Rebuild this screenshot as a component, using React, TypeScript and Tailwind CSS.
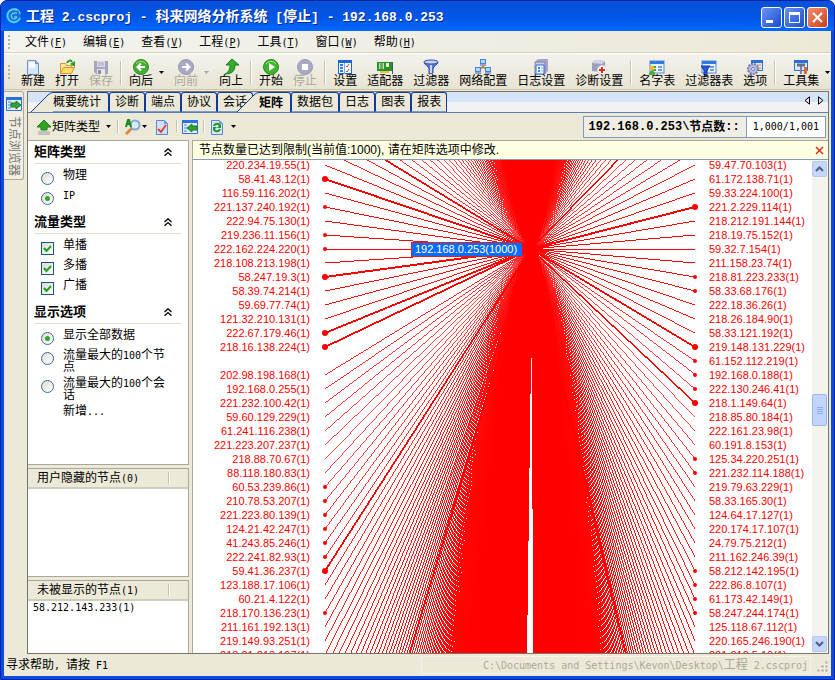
import type { ReactNode } from "react";

const LEFT_NODES = [
  "220.234.19.55", "58.41.43.12", "116.59.116.202", "221.137.240.192", "222.94.75.130", "219.236.11.156",
  "222.162.224.220", "218.108.213.198", "58.247.19.3", "58.39.74.214", "59.69.77.74", "121.32.210.131",
  "222.67.179.46", "218.16.138.224", "", "202.98.198.168", "192.168.0.255", "221.232.100.42",
  "59.60.129.229", "61.241.116.238", "221.223.207.237", "218.88.70.67", "88.118.180.83", "60.53.239.86",
  "210.78.53.207", "221.223.80.139", "124.21.42.247", "41.243.85.246", "222.241.82.93", "59.41.36.237",
  "123.188.17.106", "60.21.4.122", "218.170.136.23", "211.161.192.13", "219.149.93.251", "218.21.213.197",
];

const RIGHT_NODES = [
  "59.47.70.103", "61.172.138.71", "59.33.224.100", "221.2.229.114", "218.212.191.144", "218.19.75.152",
  "59.32.7.154", "211.158.23.74", "218.81.223.233", "58.33.68.176", "222.18.36.26", "218.26.184.90",
  "58.33.121.192", "219.148.131.229", "61.152.112.219", "192.168.0.188", "222.130.246.41", "218.1.149.64",
  "218.85.80.184", "222.161.23.98", "60.191.8.153", "125.34.220.251", "221.232.114.188", "219.79.63.229",
  "58.33.165.30", "124.64.17.127", "220.174.17.107", "24.79.75.212", "211.162.246.39", "58.212.142.195",
  "222.86.8.107", "61.173.42.149", "58.247.244.174", "125.118.67.112", "220.165.246.190", "221.212.5.10",
];

// row indexes, row 0 is the first visible one
const LEFT_HEAVY = [-3, 1, 8, 12, 13, 29, 55];
const RIGHT_HEAVY = [-6, 3, 13, 17, 56];
const LEFT_DOTS = [3, 5, 6, 23, 24, 25, 26, 27, 28, 32];
const RIGHT_DOTS = [8, 9, 14, 15, 16, 21, 22, 29, 30, 31, 32];
const ROWS = Array.from({ length: 500 }, (_, i) => i - 244);

const HUB = { x: 338, y: 89 };
const LEFT_X = 132;
const RIGHT_X = 502;
const rowY = (row: number) => 5 + row * 14;

function Ray({ x, row, weight = 1 }: { x: number; row: number; weight?: number }) {
  const dx = Math.abs(x - HUB.x);
  const dy = Math.abs(rowY(row) - HUB.y);
  // one pixel per step along the longer axis, whatever the angle
  const width = (weight * Math.max(dx, dy)) / Math.hypot(dx, dy);
  return <line x1={HUB.x} y1={HUB.y} x2={x} y2={rowY(row)} strokeWidth={width} />;
}

/* SimSun-like text: full-width glyphs at 12px, latin at half that width */
function T({ children }: { children: string }) {
  return (
    <>
      {children.split(/([\x20-\x7e]+)/).map((part, i) =>
        i % 2 ? (
          <span key={i} className="whitespace-pre font-['DejaVu_Sans_Mono','Noto_Sans_CJK_SC',monospace] text-[10px] leading-[0px]">{part}</span>
        ) : (
          part
        )
      )}
    </>
  );
}

const table = (
  <>
    <rect x="1" y="2" width="14" height="12" fill="#e8f2ff" stroke="#5a8ad0" />
    <rect x="1" y="2" width="14" height="3" fill="#2f7be0" />
    <path d="M3 8h4M9 8h4M3 11h4M9 11h4" stroke="#3f9a4a" strokeWidth="2" />
    <path d="M9 8h4M9 11h4" stroke="#6f9fe0" strokeWidth="2" />
  </>
);

const icons: Record<string, ReactNode> = {
  new: (
    <>
      <path d="M2.5 1.5h8l3 3v11h-11z" fill="#d4e6ff" stroke="#7090d0" />
      <path d="M4 3h6v6H4z" fill="#f6faff" />
      <path d="M10.5 1.5v3h3z" fill="#9cc0f4" stroke="#7090d0" />
    </>
  ),
  open: (
    <>
      <path d="M1.5 14.5v-10h5l1 2h5v3" fill="#ffe8a0" stroke="#d8962a" />
      <path d="M1.5 14.5l3-6h11l-3 6z" fill="#ffd870" stroke="#d8962a" />
      <path d="M8 4c1-3 4-3 5-1" fill="none" stroke="#2c9a1c" strokeWidth="2" />
      <path d="M16 2v6l-5-3z" fill="#2c9a1c" />
    </>
  ),
  save: (
    <>
      <path d="M1 2h14v13H3l-2-2z" fill="#a5a5bd" />
      <path d="M4 2h8v6H4z" fill="#dcdce8" />
      <path d="M5 4h6M5 6h6" stroke="#a5a5bd" />
      <path d="M4 10h8v5H4z" fill="#e6e6ee" />
      <path d="M5 11h3v4H5z" fill="#8c8ca8" />
    </>
  ),
  back: (
    <>
      <circle cx="8" cy="8" r="7.5" fill="#48ad35" stroke="#2c8a20" />
      <path d="M3 5a6 6 0 0 1 10 0" stroke="#9ae07e" fill="none" />
      <path d="M12 8H5M8 4.500L4.500 8 8 11.500" stroke="#fff" strokeWidth="2" fill="none" />
    </>
  ),
  forward: (
    <>
      <circle cx="8" cy="8" r="7.5" fill="#a6a8c4" stroke="#9698b8" />
      <path d="M4 8h7M8 4.500L11.500 8 8 11.500" stroke="#fff" strokeWidth="2" fill="none" />
    </>
  ),
  up: <path d="M9 0l7 6h-4c0 5-2 9-10 9 4-2 5-5 5-9H3z" fill="#35aa2c" stroke="#16801a" />,
  play: (
    <>
      <circle cx="8" cy="8" r="7.5" fill="#3fb52e" stroke="#238a1c" />
      <path d="M3 5a6 6 0 0 1 10 0" stroke="#a4ea88" fill="none" />
      <path d="M6 4l6 4-6 4z" fill="#fff" />
    </>
  ),
  stop: (
    <>
      <circle cx="8" cy="8" r="7.5" fill="#a8aac4" stroke="#9698b8" />
      <rect x="5" y="5" width="6" height="6" fill="#fff" />
    </>
  ),
  settings: (
    <>
      <rect x="1.500" y="1.500" width="13" height="13" fill="#f4f9ff" stroke="#1b66d8" />
      <path d="M1 1h14v3H1z" fill="#1b66d8" />
      <path d="M3 6h3M3 9h3M3 12h3" stroke="#2f7be0" strokeWidth="2" />
      <path d="M7.500 4v11" stroke="#7aa8ec" />
      <path d="M9 7l1 1 2-3M9 12l1 1 2-3" stroke="#e04a2a" fill="none" />
    </>
  ),
  adapter: (
    <>
      <path d="M0 3h15v9H0z" fill="#2c8e2c" />
      <path d="M2 4h5v6H2z" fill="#b9e6a4" />
      <path d="M3 5h3M3 7h3M3 9h3" stroke="#20702a" />
      <path d="M9 4h3v4H9z" fill="#e8f0c0" />
      <path d="M3 12h9v2H3z" fill="#e8c234" />
      <path d="M14 3h2v12h-1V5z" fill="#305878" />
    </>
  ),
  filter: (
    <>
      <path d="M1 3c0 3 5 4 5 7v5l4-1v-4c0-3 5-4 5-7z" fill="#5878d8" stroke="#3c50a8" />
      <path d="M8 6v8" stroke="#c8d8ff" strokeWidth="2" />
      <ellipse cx="8" cy="3" rx="7" ry="2" fill="#c4d2fa" stroke="#3c50a8" />
    </>
  ),
  network: (
    <>
      <path d="M8 5v4M3 11l5-3 5 3" stroke="#c0862a" strokeWidth="2" fill="none" />
      <path d="M5 0h6v5H5zM0 8h6v5H0zM10 8h6v5h-6z" fill="#4d82d8" />
      <path d="M6 1h4v3H6zM1 9h4v3H1zM11 9h4v3h-4z" fill="#a4dcff" />
      <path d="M5 6h6M0 14h6M10 14h6" stroke="#96a4cc" strokeWidth="2" />
    </>
  ),
  log: (
    <>
      <path d="M2 3l3-3h10v12l-3 3H2z" fill="#a4a6cc" />
      <path d="M2 3h10v12H2z" fill="#c6c8e4" stroke="#8082ac" />
      <path d="M3 6h8v9H3z" fill="#f4f8ff" stroke="#2a70d8" />
      <path d="M5 9h2M5 12h2" stroke="#3c80e0" strokeWidth="2" />
      <path d="M8 9h2M8 12h2" stroke="#8cb4f0" />
    </>
  ),
  diagnose: (
    <>
      <path d="M1 4l3-3 10 1v8l-3 3-10-1z" fill="#9da0bc" />
      <path d="M1 4l10 1 3-3-10-1z" fill="#d2d4e6" />
      <circle cx="11" cy="11" r="4.500" fill="#fff" stroke="#d8d8e0" />
      <path d="M11 8v6M8 11h6" stroke="#e8281c" strokeWidth="2" />
    </>
  ),
  names: (
    <>
      {table}
      <circle cx="3" cy="9" r="2.500" fill="#e6c02c" />
      <path d="M0 16c0-6 6-6 6 0z" fill="#4ca838" />
    </>
  ),
  filterTable: (
    <>
      {table}
      <path d="M0 7h9l-3 4v5H3v-5z" fill="#2456e8" stroke="#1636a0" />
    </>
  ),
  options: (
    <>
      <path d="M4.500 1.500h11v10h-11z" fill="#dcecff" stroke="#2a70d8" />
      <path d="M4 1h12v3H4z" fill="#2a70d8" />
      <path d="M10 6h4M11 9h3" stroke="#e08030" />
      <circle cx="6" cy="10" r="5" fill="#b8bce0" stroke="#7478ac" strokeWidth="2" strokeDasharray="2 1" />
      <circle cx="6" cy="10" r="1.500" fill="#fff" stroke="#7478ac" />
    </>
  ),
  tools: (
    <>
      <path d="M1.500 1.500h13v10h-13z" fill="#d8eaff" stroke="#2a70d8" />
      <path d="M1 1h14v3H1z" fill="#2a70d8" />
      <path d="M8 6v9" stroke="#8084a0" strokeWidth="2" />
      <path d="M4 6h8" stroke="#686c80" strokeWidth="3" />
      <path d="M12.500 8v7" stroke="#e06a28" strokeWidth="3" />
    </>
  ),
  green: (
    <>
      <path d="M8 1l7 7h-4v3H5V8H1z" fill="#2fa41f" stroke="#17801a" />
      <path d="M2 13h12M2 15h12" stroke="#9c9c98" />
    </>
  ),
  find: (
    <>
      <path d="M7 9l-6 6" stroke="#e08a3a" strokeWidth="3" />
      <circle cx="10" cy="6" r="4.500" fill="#d4ecff" stroke="#8aa4d0" strokeWidth="2" />
      <path d="M1 8l2-7h1l2 7M2 5h4" stroke="#158a1c" strokeWidth="2" fill="none" />
    </>
  ),
  check: (
    <>
      <path d="M2.500 1.500h8l3 3v11h-11z" fill="#cfe2ff" stroke="#5c84d0" />
      <path d="M10 1l4 4h-4z" fill="#6c9cec" />
      <path d="M4 10l3 3 5-7" stroke="#e8402c" strokeWidth="2" fill="none" />
    </>
  ),
  dockLeft: (
    <>
      <path d="M.5 1.500h15v13H.5z" fill="#e4f0ff" stroke="#2a70d8" />
      <path d="M0 1h16v3H0z" fill="#2a70d8" />
      <path d="M2 6h3M2 9h3M2 12h3" stroke="#3c80e0" />
      <path d="M5 9l5-4v2h5v4h-5v2z" fill="#33a32b" stroke="#187a1c" />
    </>
  ),
  dockRight: (
    <>
      <path d="M.5 1.500h15v13H.5z" fill="#e4f0ff" stroke="#2a70d8" />
      <path d="M0 1h16v3H0z" fill="#2a70d8" />
      <path d="M2 6h3M2 9h3M2 12h3" stroke="#3c80e0" />
      <path d="M15 9l-5-4v2H5v4h5v2z" fill="#33a32b" stroke="#187a1c" />
    </>
  ),
  refresh: (
    <>
      <path d="M2.500 1.500h8l3 3v11h-11z" fill="#d6e6ff" stroke="#5c84d0" />
      <path d="M10 1l4 4h-4z" fill="#6c9cec" />
      <path d="M5 7c1-3 5-3 6 0M11 10c-1 3-5 3-6 0" stroke="#1f9a22" strokeWidth="2" fill="none" />
      <path d="M12 5v4H8zM4 12V8h4z" fill="#1f9a22" />
    </>
  ),
};

function Icon({ name, className = "" }: { name: string; className?: string }) {
  return (
    <svg viewBox="0 0 16 16" aria-hidden="true" className={`size-4 shrink-0 ${className}`}>
      {icons[name]}
    </svg>
  );
}

function Caret({ off = false }: { off?: boolean }) {
  return (
    <svg viewBox="0 0 5 3" aria-hidden="true" className={`h-[3px] w-[5px] shrink-0 ${off ? "text-[#aca899]" : "text-black"}`}>
      <path d="M0 0h5L2.500 3z" fill="currentColor" />
    </svg>
  );
}

function Grip() {
  return (
    <div className="flex flex-col justify-center gap-[2px] py-1">
      {[0, 1, 2, 3].map((i) => (
        <span key={i} className="size-[2px] bg-[#b4b19f]" />
      ))}
    </div>
  );
}

function Separator({ className = "h-6" }: { className?: string }) {
  return <div className={`mx-[2px] w-[2px] shrink-0 border-l border-r border-l-[#c5c2b2] border-r-white ${className}`} />;
}

function Tool({ icon, label, off = false, drop = false }: { icon: string; label: string; off?: boolean; drop?: boolean }) {
  return (
    <>
      <button type="button" disabled={off} className={`flex shrink-0 flex-col items-center px-[5px] ${off ? "text-[#aca899]" : ""}`}>
        <Icon name={icon} />
        <span className="leading-[12px]">{label}</span>
      </button>
      {drop && (
        <button type="button" disabled={off} aria-label={`${label}选项`} className="mr-1 flex w-[7px] shrink-0 items-center justify-center">
          <Caret off={off} />
        </button>
      )}
    </>
  );
}

function Tab({ label, active = false, slant = false }: { label: string; active?: boolean; slant?: boolean }) {
  return (
    <button
      type="button"
      role="tab"
      aria-selected={active}
      className={`relative flex h-5 shrink-0 ${active ? "z-10 -ml-[16px] font-bold" : ""}`}
    >
      {slant && (
        <svg viewBox="0 0 22 20" aria-hidden="true" className="h-5 w-[22px]">
          <path d="M0 20L17 3Q19.500 .5 22 .5V20z" fill="#ece9d8" />
          <path d="M0 20L17 3Q19.500 .5 22 .5" fill="none" stroke="#123c9c" />
        </svg>
      )}
      <span
        className={`flex h-full items-center border-r border-t border-[#123c9c] bg-[#ece9d8] ${slant ? "rounded-tr-[3px] pr-[7px]" : "rounded-t-[3px] border-l px-[5px]"} ${active ? "" : "border-b border-b-[#7d9cc8]"}`}
      >
        {label}
      </span>
    </button>
  );
}

function Section({ title, children }: { title: string; children: ReactNode }) {
  return (
    <section>
      <h2 className="ml-[6px] mr-[6px] flex h-[23px] items-center justify-between border-b border-[#e2dfd0] pr-[10px] text-[13px] font-bold">
        {title}
        <button type="button" aria-label={`折叠${title}`}>
          <svg viewBox="0 0 8 8" className="size-2">
            <path d="M.5 4L4 .8 7.500 4M.5 7.800L4 4.600l3.500 3.200" fill="none" stroke="#000" strokeWidth="1.300" />
          </svg>
        </button>
      </h2>
      <div className="pb-1 pl-[13px] pt-[3px]">{children}</div>
    </section>
  );
}

function Choice({ type, name, label, checked = false }: { type: "radio" | "checkbox"; name: string; label: string; checked?: boolean }) {
  return (
    <label className="flex min-h-5 items-start gap-[9px]">
      <span className="mt-[5px] grid size-[13px] shrink-0">
        <input
          type={type}
          name={name}
          defaultChecked={checked}
          className={`peer col-start-1 row-start-1 size-[13px] appearance-none border bg-linear-to-br from-[#dedcd0] to-white ${type === "radio" ? "rounded-full border-[#3d6a9a]" : "border-[#1c5180]"}`}
        />
        <svg viewBox="0 0 13 13" aria-hidden="true" className="pointer-events-none invisible col-start-1 row-start-1 size-[13px] peer-checked:visible">
          {type === "radio" ? (
            <circle cx="6.5" cy="6.5" r="2.500" fill="#2fa82f" />
          ) : (
            <path d="M3 6l2.500 3L10 4" fill="none" stroke="#21a121" strokeWidth="2" />
          )}
        </svg>
      </span>
      <span className="w-[106px] break-all py-[2px] leading-[12px]"><T>{label}</T></span>
    </label>
  );
}

function ListHeader({ children }: { children: string }) {
  return (
    <h3 className="flex h-[21px] shrink-0 items-center justify-between border-b-2 border-t border-b-[#d0cdbc] border-t-[#aca899] bg-[#ece9d8] pl-[9px] pr-[18px]">
      <span><T>{children}</T></span>
      <span className="h-3 w-[2px] border-l border-r border-l-[#c5c2b2] border-r-white" />
    </h3>
  );
}

function SidePanel() {
  return (
    <aside className="flex w-[161px] shrink-0 flex-col gap-[3px]">
      <div className="flex-1 basis-[324px] overflow-hidden border-b border-r border-t border-[#aca899] bg-white">
        <Section title="矩阵类型">
          <Choice type="radio" name="matrix" label="物理" />
          <Choice type="radio" name="matrix" label="IP" checked />
        </Section>
        <Section title="流量类型">
          <Choice type="checkbox" name="unicast" label="单播" checked />
          <Choice type="checkbox" name="multicast" label="多播" checked />
          <Choice type="checkbox" name="broadcast" label="广播" checked />
        </Section>
        <Section title="显示选项">
          <Choice type="radio" name="display" label="显示全部数据" checked />
          <Choice type="radio" name="display" label="流量最大的100个节点" />
          <Choice type="radio" name="display" label="流量最大的100个会话" />
          <a href="#new" className="ml-[22px] block py-[2px] leading-[12px]"><T>新增...</T></a>
        </Section>
      </div>
      <div className="flex h-[109px] shrink-0 flex-col border-b border-r border-[#aca899] bg-white">
        <ListHeader>用户隐藏的节点(0)</ListHeader>
      </div>
      <div className="flex h-[73px] shrink-0 flex-col border-r border-[#aca899] bg-white">
        <ListHeader>未被显示的节点(1)</ListHeader>
        <p className="pl-[5px] leading-[12px]"><T>58.212.143.233(1)</T></p>
      </div>
    </aside>
  );
}

function Matrix() {
  return (
    <div className="flex min-w-0 flex-1 justify-center overflow-hidden bg-white">
      <svg
        viewBox="1 0 618 493"
        className="h-[493px] w-[618px] shrink-0 font-['Liberation_Sans',sans-serif] text-[11px]"
        role="img"
        aria-label="192.168.0.253 节点矩阵"
      >
        <g stroke="#f00" fill="none" shapeRendering="crispEdges">
          {ROWS.map((row) => (
            <g key={row}>
              {row !== 14 && <Ray x={LEFT_X} row={row} weight={LEFT_HEAVY.includes(row) ? 2 : 1} />}
              <Ray x={RIGHT_X} row={row} weight={RIGHT_HEAVY.includes(row) ? 2 : 1} />
            </g>
          ))}
        </g>
        <path d={`M${HUB.x} ${HUB.y}L298 493H378zM${HUB.x} ${HUB.y}L326 0H350z`} fill="#f00" />
        <path d="M338 198h1l1 295h-6z" fill="#fff" shapeRendering="crispEdges" />

        <g fill="#f00">
          {LEFT_NODES.map((ip, row) =>
            ip ? (
              <g key={row}>
                {LEFT_DOTS.includes(row) && <circle cx={LEFT_X} cy={rowY(row)} r="2" />}
                {LEFT_HEAVY.includes(row) && <circle cx={LEFT_X} cy={rowY(row)} r="3" />}
                <text x="117" y={rowY(row) + 4} textAnchor="end">{ip}(1)</text>
              </g>
            ) : null
          )}
          {RIGHT_NODES.map((ip, row) => (
            <g key={row}>
              {RIGHT_DOTS.includes(row) && <circle cx={RIGHT_X} cy={rowY(row)} r="2" />}
              {RIGHT_HEAVY.includes(row) && <circle cx={RIGHT_X} cy={rowY(row)} r="3" />}
              <text x="516" y={rowY(row) + 4}>{ip}(1)</text>
            </g>
          ))}
        </g>

        <rect x="218.500" y="82.500" width="109" height="14" fill="#0a6cff" stroke="#d22" />
        <rect x="219" y="83" width="110" height="13" fill="#0a6cff" />
        <text x="273" y="93" textAnchor="middle" fill="#fff">192.168.0.253(1000)</text>
      </svg>
    </div>
  );
}

function ScrollBar() {
  const button = "flex h-4 w-[15px] shrink-0 items-center justify-center rounded-[2px] border border-[#b4c8f0] bg-[#c4d6fc]";
  return (
    <div className="flex w-4 shrink-0 flex-col bg-[#f4f3ee] py-px">
      <button type="button" aria-label="向上滚动" className={button}>
        <svg viewBox="0 0 9 6" className="h-[6px] w-[9px]"><path d="M1 5l3.500-3.500L8 5" fill="none" stroke="#4d6185" strokeWidth="2" /></svg>
      </button>
      <div className="grow-[219]" />
      <div className="flex h-8 w-[15px] shrink-0 flex-col items-center justify-center gap-px rounded-[2px] border border-[#98b4ea] bg-[#c2d5fc]">
        {[0, 1, 2, 3].map((i) => (
          <span key={i} className="h-px w-[6px] bg-[#8cb0f8]" />
        ))}
      </div>
      <div className="grow-[211]" />
      <button type="button" aria-label="向下滚动" className={button}>
        <svg viewBox="0 0 9 6" className="h-[6px] w-[9px]"><path d="M1 1l3.500 3.500L8 1" fill="none" stroke="#4d6185" strokeWidth="2" /></svg>
      </button>
    </div>
  );
}

function TitleBar() {
  const box = "flex size-[21px] items-center justify-center rounded-[3px] border border-white";
  return (
    <header className="flex h-[30px] shrink-0 items-center bg-linear-to-b from-[#0a50d8] via-[#0055e5] to-[#0068ff] pl-[5px] pr-[6px] text-white">
      <svg viewBox="0 0 16 16" aria-hidden="true" className="size-4">
        <circle cx="8" cy="8" r="7" fill="#1273d8" />
        <path d="M11 2a6.500 6.500 0 1 0 3 8" fill="none" stroke="#4ed0f8" strokeWidth="2" />
        <path d="M11 5H8a3 3 0 1 0 3 4H8M9 1c3 0 5 2 5 5" fill="none" stroke="#8ee6ff" />
      </svg>
      <h1 className="ml-1 flex-1 truncate pt-px text-[14px] font-bold [text-shadow:1px_1px_#0a2a90]">
        {["工程", " 2.cscproj - ", "科来网络分析系统", " [", "停止", "] - 192.168.0.253"].map((part, i) => (
          <span key={i} className={i % 2 ? "whitespace-pre font-['Liberation_Mono',monospace] text-[13px]" : ""}>{part}</span>
        ))}
      </h1>
      <div className="flex gap-[2px] pt-[2px]">
        <button type="button" aria-label="最小化" className={`${box} bg-linear-to-br from-[#6a94f4] to-[#1c48d0]`}>
          <svg viewBox="0 0 19 19" className="size-[19px]"><path d="M4 12h7v3H4z" fill="#fff" /></svg>
        </button>
        <button type="button" aria-label="最大化" className={`${box} bg-linear-to-br from-[#6a94f4] to-[#1c48d0]`}>
          <svg viewBox="0 0 19 19" className="size-[19px]"><path d="M4.500 5.500h10v9h-10z" fill="none" stroke="#fff" /><path d="M4 4h11v3H4z" fill="#fff" /></svg>
        </button>
        <button type="button" aria-label="关闭" className={`${box} bg-linear-to-br from-[#f0906c] to-[#cc3a18]`}>
          <svg viewBox="0 0 19 19" className="size-[19px]"><path d="M5 5l9 9M14 5l-9 9" stroke="#fff" strokeWidth="2" /></svg>
        </button>
      </div>
    </header>
  );
}

const MENUS = [["文件", "F"], ["编辑", "E"], ["查看", "V"], ["工程", "P"], ["工具", "T"], ["窗口", "W"], ["帮助", "H"]];

export default function App() {
  return (
    <div className="h-screen overflow-hidden rounded-t-[7px] border border-[#0022a8] bg-[#0a4be0] px-[3px] pb-[3px] font-['Liberation_Sans','Noto_Sans_CJK_SC',sans-serif] text-[12px] text-black">
      <div className="-mx-[3px]">
        <TitleBar />
      </div>
      <div className="flex h-[calc(100%-30px)] flex-col bg-[#ece9d8]">
        {/* menu */}
        <nav className="flex h-[22px] shrink-0 items-center border-b border-[#d8d2bd] bg-linear-to-r from-[#f3f3ef] to-[#ece9d8] pl-1">
          <Grip />
          <div className="flex pl-[7px]">
            {MENUS.map(([label, key]) => (
              <button key={key} type="button" className="px-2">
                {label}
                <span className="font-['DejaVu_Sans_Mono',monospace] text-[10px]">(<u>{key}</u>)</span>
              </button>
            ))}
          </div>
        </nav>

        {/* toolbar */}
        <div className="flex h-[37px] shrink-0 items-center overflow-hidden border-b border-t border-b-[#c9c5b2] border-t-white bg-linear-to-b from-[#f3f2ec] to-[#e8e4d2] pl-1">
          <Grip />
          <div className="flex items-center pl-[6px] pt-[2px]">
            <Tool icon="new" label="新建" />
            <Tool icon="open" label="打开" />
            <Tool icon="save" label="保存" off />
            <Separator />
            <Tool icon="back" label="向后" drop />
            <Tool icon="forward" label="向前" off drop />
            <Tool icon="up" label="向上" />
            <Separator />
            <Tool icon="play" label="开始" />
            <Tool icon="stop" label="停止" off />
            <Separator />
            <Tool icon="settings" label="设置" />
            <Tool icon="adapter" label="适配器" />
            <Tool icon="filter" label="过滤器" />
            <Tool icon="network" label="网络配置" />
            <Tool icon="log" label="日志设置" />
            <Tool icon="diagnose" label="诊断设置" />
            <Separator />
            <Tool icon="names" label="名字表" />
            <Tool icon="filterTable" label="过滤器表" />
            <Tool icon="options" label="选项" />
            <Separator />
            <Tool icon="tools" label="工具集" drop />
          </div>
        </div>

        <div className="flex min-h-0 flex-1 pr-[2px] pt-px">
          {/* collapsed node browser */}
          <div className="w-[23px] shrink-0">
            <button type="button" className="flex h-[89px] w-5 flex-col items-center gap-1 rounded-r-[3px] border-b border-r border-t border-[#aca899] bg-[#f1efe4] pt-1 text-[#75736a]">
              <Icon name="dockRight" />
              <span className="leading-[14px] [text-orientation:sideways] [writing-mode:vertical-rl]">节点浏览器</span>
            </button>
          </div>

          <div className="flex min-w-0 flex-1 flex-col border border-[#77756a]">
            {/* tabs */}
            <div className="flex h-[21px] shrink-0 items-end border-b border-[#5a80b8] bg-linear-to-b from-[#d6e4f8] from-50% to-[#f2f2f5] to-50%">
              <div role="tablist" className="flex pl-[3px]">
                <Tab label="概要统计" slant />
                <Tab label="诊断" />
                <Tab label="端点" />
                <Tab label="协议" />
                <Tab label="会话" />
                <Tab label="矩阵" active slant />
                <Tab label="数据包" />
                <Tab label="日志" />
                <Tab label="图表" />
                <Tab label="报表" />
              </div>
              <div className="flex flex-1 justify-end gap-2 self-start pr-1 pt-1">
                <button type="button" aria-label="上一个标签">
                  <svg viewBox="0 0 6 9" className="h-[9px] w-[6px]"><path d="M5.500 .8v7.400L1 4.500z" fill="none" stroke="#000" /></svg>
                </button>
                <button type="button" aria-label="下一个标签">
                  <svg viewBox="0 0 6 9" className="h-[9px] w-[6px]"><path d="M.5 .8v7.400L5 4.500z" fill="none" stroke="#000" /></svg>
                </button>
              </div>
            </div>

            {/* view toolbar */}
            <div className="flex h-[27px] shrink-0 items-center pl-2 pr-[2px]">
              <button type="button" className="flex items-center gap-[6px]">
                <span className="flex items-center"><Icon name="green" />矩阵类型</span>
                <Caret />
              </button>
              <Separator className="ml-[6px] mr-[6px] h-[13px]" />
              <button type="button" aria-label="查找" className="flex items-center gap-px"><Icon name="find" /><Caret /></button>
              <button type="button" aria-label="选择" className="ml-[7px]"><Icon name="check" /></button>
              <Separator className="ml-[6px] mr-[4px] h-[13px]" />
              <button type="button" aria-label="显示面板"><Icon name="dockLeft" /></button>
              <Separator className="ml-[5px] mr-[4px] h-[13px]" />
              <button type="button" aria-label="刷新" className="flex items-center gap-[6px]"><Icon name="refresh" /><Caret /></button>
              <dl className="ml-auto flex h-[22px] items-center border border-[#7f9db9]">
                <dt className="flex h-full items-center bg-[#f0eee4] pl-[5px] pr-[6px] font-bold">
                  <span className="font-['Liberation_Mono',monospace] text-[12px]">192.168.0.253\</span>
                  节点数
                  <span className="font-['Liberation_Mono',monospace] text-[12px]">::</span>
                </dt>
                <dd className="flex h-full items-center border-l border-[#7f9db9] bg-white px-[6px]"><T>1,000/1,001</T></dd>
              </dl>
            </div>

            <div className="flex min-h-0 flex-1 gap-[3px]">
              <SidePanel />
              <main className="flex min-w-0 flex-1 flex-col border-l border-t border-[#aca899]">
                <div className="flex h-[19px] shrink-0 items-center justify-between border-b border-[#7f9db9] bg-[#ffffe1] pl-[6px] pr-1">
                  <span>节点数量已达到限制(当前值:1000), 请在矩阵选项中修改.</span>
                  <button type="button" aria-label="关闭提示">
                    <svg viewBox="0 0 9 9" className="size-[9px]"><path d="M1 1l7 7M8 1L1 8" stroke="#d8321a" strokeWidth="1.500" /></svg>
                  </button>
                </div>
                <div className="flex min-h-0 flex-1">
                  <Matrix />
                  <ScrollBar />
                </div>
              </main>
            </div>
          </div>
        </div>

        {/* status bar */}
        <footer className="flex h-[22px] shrink-0 items-center pl-[2px]">
          <span><T>寻求帮助, 请按 F1</T></span>
          <div className="ml-auto flex h-[18px] w-[390px] items-center justify-end border border-[#f5f3ea] pr-[2px] text-[#aca899]">
            <span><T>C:\Documents and Settings\Kevon\Desktop\工程 2.cscproj</T></span>
          </div>
          <svg viewBox="0 0 12 12" aria-hidden="true" className="ml-[6px] mr-[2px] mt-1 size-3">
            <path d="M8 0h3v3H8zM4 4h3v3H4zM8 4h3v3H8zM0 8h3v3H0zM4 8h3v3H4zM8 8h3v3H8z" fill="#b8b4a2" stroke="#fff" strokeWidth=".5" />
          </svg>
        </footer>
      </div>
    </div>
  );
}
